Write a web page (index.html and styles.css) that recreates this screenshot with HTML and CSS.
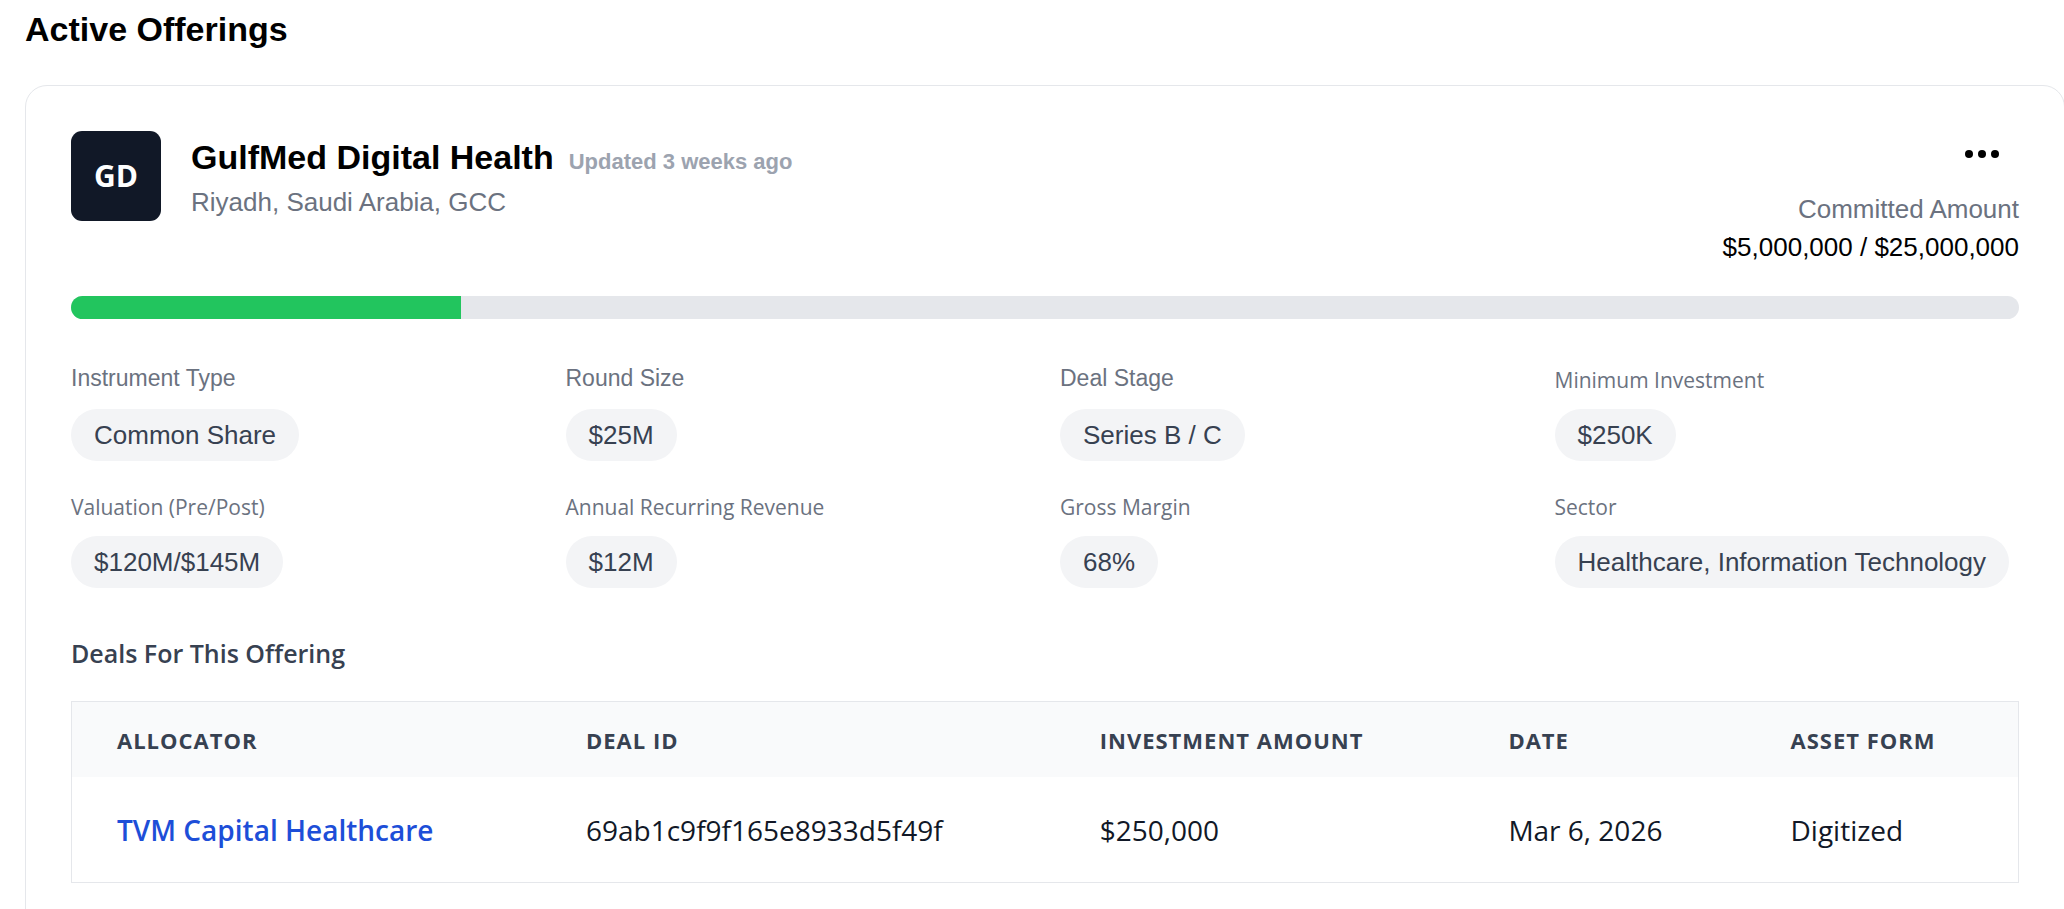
FILE: index.html
```html
<!DOCTYPE html>
<html lang="en">
<head>
<meta charset="utf-8">
<title>Active Offerings</title>
<link rel="stylesheet" href="styles.css">
</head>
<body>
<main class="page">
  <h1 class="page-title">Active Offerings</h1>
  <article class="card">
    <header class="card-header">
      <div class="company">
        <div class="logo">GD</div>
        <div>
          <h2 class="company-name">GulfMed Digital Health <span class="updated">Updated 3 weeks ago</span></h2>
          <p class="location">Riyadh, Saudi Arabia, GCC</p>
        </div>
      </div>
      <div class="committed">
        <button class="menu-button" type="button" aria-label="More actions">
          <svg width="36" height="12" viewBox="0 0 36 12" fill="currentColor" aria-hidden="true"><circle cx="5" cy="6" r="4"/><circle cx="18" cy="6" r="4"/><circle cx="31" cy="6" r="4"/></svg>
        </button>
        <p class="committed-label">Committed Amount</p>
        <p class="committed-value">$5,000,000 / $25,000,000</p>
      </div>
    </header>
    <div class="progress" role="progressbar" aria-label="Committed" aria-valuenow="20" aria-valuemin="0" aria-valuemax="100">
      <div class="progress-fill" style="width: 20%"></div>
    </div>
    <dl class="facts">
      <div><dt class="fact-label">Instrument Type</dt><dd class="pill">Common Share</dd></div>
      <div><dt class="fact-label">Round Size</dt><dd class="pill">$25M</dd></div>
      <div><dt class="fact-label">Deal Stage</dt><dd class="pill">Series B / C</dd></div>
      <div><dt class="fact-label alt">Minimum Investment</dt><dd class="pill">$250K</dd></div>
      <div><dt class="fact-label alt">Valuation (Pre/Post)</dt><dd class="pill">$120M/$145M</dd></div>
      <div><dt class="fact-label alt">Annual Recurring Revenue</dt><dd class="pill">$12M</dd></div>
      <div><dt class="fact-label alt">Gross Margin</dt><dd class="pill">68%</dd></div>
      <div><dt class="fact-label alt">Sector</dt><dd class="pill">Healthcare, Information Technology</dd></div>
    </dl>
    <h3 class="deals-title">Deals For This Offering</h3>
    <div class="table-wrap">
      <table class="deals">
        <colgroup><col class="c-allocator"><col class="c-id"><col class="c-amount"><col class="c-date"><col></colgroup>
        <thead>
          <tr><th scope="col">Allocator</th><th scope="col">Deal ID</th><th scope="col">Investment Amount</th><th scope="col">Date</th><th scope="col">Asset Form</th></tr>
        </thead>
        <tbody>
          <tr><td><a class="allocator" href="#">TVM Capital Healthcare</a></td><td>69ab1c9f9f165e8933d5f49f</td><td>$250,000</td><td>Mar 6, 2026</td><td>Digitized</td></tr>
        </tbody>
      </table>
    </div>
  </article>
</main>
</body>
</html>
```
FILE: styles.css
```css
* { box-sizing: border-box; }
html { overflow: hidden; }
body {
  margin: 0;
  background: #fff;
  color: #000;
  font-family: "Liberation Sans", Arial, sans-serif;
}
h1, h2, h3, p, dl, dd { margin: 0; }
.page { padding: 3px 0 0 25px; }
.page-title { font-size: 34px; line-height: 52px; font-weight: 700; }
/* The card runs to the window's right edge, so its side border is clipped. */
.card {
  margin: 30px -1px 0 0;
  padding: 45px 45px 60px;
  border: 1px solid #e5e7eb;
  border-radius: 22px;
}
.card-header { display: flex; justify-content: space-between; }
.company { display: flex; align-items: flex-start; gap: 30px; }
.logo {
  display: flex;
  align-items: center;
  justify-content: center;
  width: 90px;
  height: 90px;
  border-radius: 11px;
  background: #111827;
  color: #fff;
  font: 700 30px/38px "Open Sans", sans-serif;
}
.company-name {
  display: flex;
  align-items: baseline;
  gap: 15px;
  font-size: 34px;
  line-height: 52px;
  font-weight: 700;
}
.updated { font-size: 22px; color: #9ca3af; }
.location { font-size: 26px; line-height: 28px; color: #6b7280; }
.committed {
  display: flex;
  flex-direction: column;
  align-items: flex-end;
  font-size: 26px;
  line-height: 38px;
}
.menu-button {
  display: flex;
  align-items: center;
  justify-content: center;
  width: 74px;
  height: 45px;
  margin-bottom: 14px;
  padding: 0;
  border: 0;
  background: none;
  color: #000;
}
.committed-label { color: #6b7280; }
.progress {
  height: 23px;
  margin-top: 30px;
  border-radius: 12px;
  background: #e5e7eb;
  overflow: hidden;
}
.progress-fill { height: 100%; background: #22c55e; }
.facts {
  display: grid;
  grid-template-columns: repeat(4, minmax(0, 1fr));
  gap: 30px;
  margin-top: 45px;
}
.fact-label {
  margin-bottom: 17px;
  font-size: 23px;
  line-height: 28px;
  color: #6b7280;
}
.alt {
  margin-bottom: 13px;
  font-family: "Open Sans", sans-serif;
  font-size: 21px;
  line-height: 32px;
}
.pill {
  width: fit-content;
  padding: 7px 23px;
  border-radius: 26px;
  background: #f3f4f6;
  color: #374151;
  font-size: 26px;
  line-height: 38px;
  white-space: nowrap;
}
.deals-title {
  margin-top: 46px;
  font: 600 25px/38px "Open Sans", sans-serif;
  color: #374151;
}
.table-wrap { margin-top: 29px; border: 1px solid #e5e7eb; }
.deals {
  width: 100%;
  border-collapse: collapse;
  table-layout: fixed;
  font-family: "Open Sans", sans-serif;
}
.c-allocator { width: 24.1%; }
.c-id { width: 26.4%; }
.c-amount { width: 21%; }
.c-date { width: 14.5%; }
.deals th {
  padding: 23px 0 22px 45px;
  background: #f9fafb;
  color: #374151;
  font-size: 22px;
  line-height: 30px;
  font-weight: 700;
  letter-spacing: 1px;
  text-align: left;
  text-transform: uppercase;
}
.deals td {
  padding: 34px 0 33px 45px;
  color: #111827;
  font-size: 28px;
  line-height: 38px;
}
.allocator { color: #1d4ed8; font-weight: 600; text-decoration: none; }
```
